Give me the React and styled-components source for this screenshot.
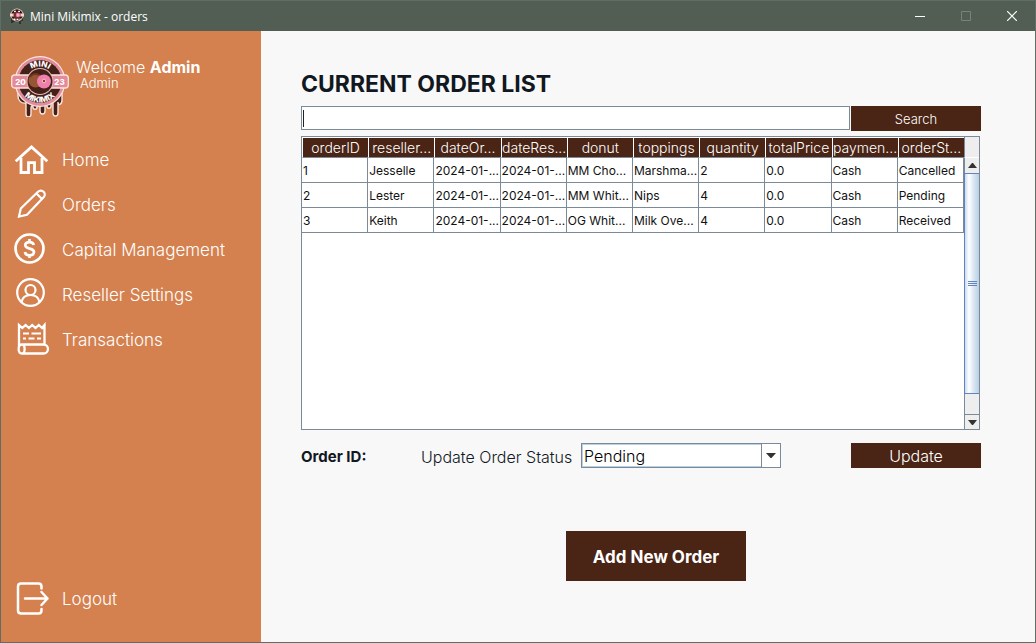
import React from "react";
import styled, { createGlobalStyle } from "styled-components";

const brown = "#4a2414";
const line = "#7a8a99";

const GlobalStyle = createGlobalStyle`
  *, *::before, *::after { box-sizing: border-box; }
  body { margin: 0; font-family: "Inter", "Liberation Sans", sans-serif; color: #12181f; }
  button, input, select { font: inherit; border-radius: 0; margin: 0; }
`;

const Window = styled.div`
  display: flex;
  flex-direction: column;
  min-height: 100vh;
  border: 1px solid #5f6e64;
  background: #f8f8f8;
`;

const TitleBar = styled.header`
  display: flex;
  align-items: center;
  height: 30px;
  padding-left: 8px;
  background: #525e54;
  color: #fff;
  font-family: "Open Sans", "Noto Sans", sans-serif;
  font-size: 12px;
`;

const WindowTitle = styled.span`
  flex: 1;
  padding-left: 5px;
`;

const WindowButton = styled.button`
  display: grid;
  place-items: center;
  width: 46px;
  height: 30px;
  padding: 0;
  border: 0;
  background: none;
  color: ${(p) => (p.disabled ? "#77827a" : "#fff")};
`;

const Body = styled.div`
  display: flex;
  flex: 1;
`;

const Sidebar = styled.aside`
  display: flex;
  flex-direction: column;
  flex: none;
  width: 260px;
  padding: 24px 0 21px 10px;
  background: #d4814f;
  color: #fff;
`;

const Profile = styled.div`
  display: flex;
  gap: 7px;
  height: 82px;
`;

const Greeting = styled.div`
  font-size: 16px;
  font-weight: 300;
  line-height: 24px;
`;

const Strong = styled.strong`
  font-weight: 700;
`;

const Role = styled.div`
  padding-left: 4px;
  font-size: 13px;
  font-weight: 300;
  line-height: 8px;
`;

const Nav = styled.nav`
  display: flex;
  flex-direction: column;
  flex: 1;
`;

const NavLink = styled.a`
  display: flex;
  align-items: center;
  gap: 10px;
  height: 45px;
  margin-top: ${(p) => (p.$last ? "auto" : "0")};
  color: #fff;
  font-size: 17px;
  font-weight: 300;
  text-decoration: none;
`;

const Main = styled.main`
  flex: 1;
  min-width: 0;
  padding: 37px 54px 40px 40px;
`;

const Heading = styled.h1`
  margin: 0 0 6px;
  font-size: 23px;
  font-weight: 700;
  line-height: 32px;
`;

const SearchRow = styled.form`
  display: flex;
  gap: 1px;
  margin-bottom: 5px;
`;

const SearchField = styled.div`
  position: relative;
  flex: 1;
  height: 24px;
`;

const SearchInput = styled.input`
  display: block;
  width: 100%;
  height: 24px;
  padding: 0 3px;
  border: 1px solid ${line};
  background: #fff;
  outline: 0;
  font-size: 13px;
`;

const Caret = styled.span`
  position: absolute;
  left: 2px;
  top: 4px;
  width: 1px;
  height: 17px;
  background: #222;
`;

const BrownButton = styled.button`
  width: ${(p) => (p.$large ? "180px" : "130px")};
  height: ${(p) => (p.$large ? "50px" : "25px")};
  padding: ${(p) => (p.$large ? "2px 0 0" : "0")};
  border: 0;
  background: ${brown};
  color: #fff;
  font-size: ${(p) => p.$size};
  font-weight: ${(p) => (p.$large ? 700 : 300)};
`;

const TablePanel = styled.div`
  display: flex;
  height: 294px;
  margin-right: 1px;
  border: 1px solid ${line};
  background: #fff;
`;

const TableArea = styled.div`
  flex: 1;
  min-width: 0;
`;

const Table = styled.table`
  width: 100%;
  table-layout: fixed;
  border-collapse: separate;
  border-spacing: 0;
`;

const HeadCell = styled.th`
  height: 21px;
  padding: 0;
  border-top: 1px solid #fff;
  border-left: 1px solid #fff;
  border-bottom: 1px solid ${line};
  background: ${brown};
  color: #fff;
  font-size: 14px;
  font-weight: 300;
  line-height: 19px;
  text-align: center;
  white-space: nowrap;
  overflow: hidden;
`;

const Cell = styled.td`
  height: 25px;
  padding: 2px 0 0 1px;
  border-right: 1px solid ${line};
  border-bottom: 1px solid ${line};
  color: #111;
  font-size: 12px;
  line-height: 22px;
  white-space: nowrap;
  overflow: hidden;
`;

const ScrollColumn = styled.div`
  display: flex;
  flex-direction: column;
  flex: none;
  width: 15px;
  background: #eee;
`;

const Corner = styled.div`
  height: 21px;
  border-left: 1px solid ${line};
  border-bottom: 1px solid #fff;
`;

const ScrollButton = styled.button`
  display: grid;
  place-items: center;
  height: 15px;
  padding: 0;
  border: 0;
  border-left: 1px solid ${line};
  border-top: ${(p) => (p.$down ? `1px solid ${line}` : "0")};
  background: #eee;
`;

const Thumb = styled.div`
  display: grid;
  place-items: center;
  height: 221px;
  border: 1px solid #6382bf;
  border-right: 0;
  background: linear-gradient(90deg, #c8dcef, #fff 28%, #dce8f4 60%, #b8cfe5);
`;

const Track = styled.div`
  flex: 1;
  border-left: 1px solid ${line};
`;

const UpdateRow = styled.form`
  display: flex;
  align-items: center;
  height: 25px;
  margin-top: 13px;
  font-size: 15px;
`;

const OrderId = styled.span`
  flex: none;
  width: 120px;
  padding-top: 2px;
  font-weight: 700;
`;

const StatusLabel = styled.label`
  flex: none;
  width: 160px;
  padding-top: 2px;
  font-size: 16px;
  font-weight: 300;
`;

const SelectBox = styled.div`
  position: relative;
  width: 200px;
  height: 25px;
  margin-right: auto;
`;

const Select = styled.select`
  display: block;
  width: 100%;
  height: 25px;
  padding: 0 22px 0 2px;
  border: 1px solid ${line};
  background: #fff;
  box-shadow: inset 0 0 0 1px #b8cfe5;
  color: #000;
  appearance: none;
  font-size: 16px;
  font-weight: 300;
  outline: 0;
`;

const SelectArrow = styled.span`
  position: absolute;
  top: 1px;
  right: 1px;
  bottom: 1px;
  display: grid;
  place-items: center;
  width: 19px;
  border-left: 1px solid ${line};
  background: #fff;
  pointer-events: none;
`;

const AddRow = styled.div`
  display: flex;
  margin-top: 63px;
  padding-left: 265px;
`;

function Donut({ size }) {
  return (
    <svg width={size} height={size * 62 / 58} viewBox="0 0 58 62" aria-hidden="true">
      <path d="M7 34h44v11c0 5-4 6-4 2v11c0 4-5 4-5 0v-9c0-3-2-3-2 0v2c0 3-4 3-4 0 0-2-2-2-2 0v5c0 4-5 4-5 0v-4c0-2-3-2-3 0 0 3-4 3-4 0 0-2-2-2-2 1v6c0 4-5 4-5 0V48c-5 1-8-3-8-7z" fill="#432018" stroke="#fbe6df" strokeWidth="1.4" />
      <circle cx="29" cy="26.500" r="25.500" fill="#fbe6df" />
      <circle cx="29" cy="26.500" r="24.300" fill="#e38a9b" />
      <circle cx="29" cy="26.500" r="21.500" fill="#432018" />
      <rect x=".7" y="20" width="56.600" height="13" rx="3" fill="#e38a9b" stroke="#fbe6df" strokeWidth="1.3" />
      <circle cx="29" cy="26.500" r="13.500" fill="#e8b9b9" />
      <circle cx="29" cy="26.500" r="12.500" fill="#432018" />
      <circle cx="24.500" cy="25.500" r="7" fill="#985533" />
      <path d="M19 22c2-3 6-4 9-2" fill="none" stroke="#6b3522" strokeWidth="2" />
      <circle cx="33" cy="26.500" r="7" fill="#ef7fac" />
      <circle cx="33" cy="26" r="1.800" fill="#8a4235" stroke="#f8bfd0" />
      <path id="badgeTop" d="M14 26.500a15 15 0 0 1 30 0" fill="none" />
      <path id="badgeBottom" d="M8 26.500a21 21 0 0 0 42 0" fill="none" />
      <g fill="#fff" fontFamily="Inter, sans-serif" fontWeight="800" textAnchor="middle">
        <text fontSize="8"><textPath href="#badgeTop" startOffset="50%">MINI</textPath></text>
        <text fontSize="8"><textPath href="#badgeBottom" startOffset="50%">MIKIMIX</textPath></text>
        <text x="9.500" y="29.500" fontSize="8">20</text>
        <text x="48.500" y="29.500" fontSize="8">23</text>
      </g>
    </svg>
  );
}

function SmallDonut() {
  return (
    <svg width="16" height="17" viewBox="0 0 16 17" aria-hidden="true">
      <path d="M3 10v5m2-4v3m3-3v3m3-4v6m2-7v4" stroke="#2b1712" strokeWidth="1.3" />
      <circle cx="8" cy="7" r="6.500" fill="#f6dcd7" />
      <circle cx="8" cy="7" r="5.800" fill="#2b1712" />
      <path d="M5 3.500h2m2 0h2M4.500 11.200h2m1 0h2m1 0h1" stroke="#fff" strokeWidth="1.5" />
      <path d="M1 5.500h14v3H1z" fill="#f6d3d3" />
      <circle cx="8" cy="7" r="3.500" fill="#752f25" />
      <circle cx="9" cy="7" r="2.200" fill="#ef7fac" />
      <circle cx="9" cy="7" r=".7" fill="#fff" />
    </svg>
  );
}

const icons = {
  home: (
    <g strokeWidth="2.800" strokeLinejoin="miter">
      <path d="M4.700 20.300 20.500 6l15.800 14.300" />
      <path d="M10 17v14.500h7.500v-9.800h6v9.800H31V17" />
    </g>
  ),
  pencil: (
    <g strokeWidth="2.200">
      <path d="m8 30.500 1.800-8L27 5.800c1.800-1.800 4.200-1.500 5.600-.1s1.700 3.800 0 5.600L16 28.800z" />
      <path d="m25.500 7.500 5.500 5.500" />
    </g>
  ),
  dollar: (
    <g strokeWidth="2.700" transform="translate(0 -1)">
      <circle cx="18.500" cy="18.500" r="14" />
      <path d="M22.800 15c-.5-2-2-2.900-4.300-2.900-2.600 0-4.200 1.300-4.200 3.200 0 4.600 8.700 2 8.700 6.700 0 2-1.700 3.300-4.500 3.300-2.500 0-4.200-1.100-4.600-3.300M18.500 9v3.200m0 13V28" />
    </g>
  ),
  user: (
    <g strokeWidth="2.200" transform="translate(0 -2)">
      <circle cx="19.500" cy="18.500" r="13.300" />
      <circle cx="19.500" cy="16" r="5" />
      <path d="M10.500 28c1-5 4.500-7 9-7s8 2 9 7" />
    </g>
  ),
  receipt: (
    <g strokeWidth="2.300" transform="translate(0 -1)">
      <path d="M8 27V5l3.300 3 3.300-3 3.300 3 3.300-3 3.300 3 3.300-3 3.300 3L33.500 5v19.500M11 24.500h21.500a4.500 4.500 0 0 1 0 9H11c-4.500 0-4.500-9 0-9zm0 0c3.500 0 3.500 9 0 9" />
      <path d="M12 13.500h6m2.500 0H30M12 18.500h3m2.500 0h6m2.500 0h4" strokeWidth="2.200" />
    </g>
  ),
  logout: (
    <g strokeWidth="2.500" strokeLinecap="round" strokeLinejoin="round">
      <path d="M30.500 8.500V6.500c0-2-1.500-3-3-3H10c-2 0-3 1-3 3v24c0 2 1 3 3 3h17.500c2 0 3-1 3-3V29" />
      <path d="M14 18.500h22.500M30.500 12l6 6.500-6 6.500" />
    </g>
  ),
};

function Icon({ name }) {
  return (
    <svg width="41" height="37" viewBox="0 0 41 37" fill="none" stroke="#fff" aria-hidden="true">
      {icons[name]}
    </svg>
  );
}

const links = [
  ["home", "Home"],
  ["pencil", "Orders"],
  ["dollar", "Capital Management"],
  ["user", "Reseller Settings"],
  ["receipt", "Transactions"],
];

const columns = ["orderID", "reseller...", "dateOr...", "dateRes...", "donut", "toppings", "quantity", "totalPrice", "paymen...", "orderSt..."];

const orders = [
  ["1", "Jesselle", "2024-01-...", "2024-01-...", "MM Cho...", "Marshma...", "2", "0.0", "Cash", "Cancelled"],
  ["2", "Lester", "2024-01-...", "2024-01-...", "MM Whit...", "Nips", "4", "0.0", "Cash", "Pending"],
  ["3", "Keith", "2024-01-...", "2024-01-...", "OG Whit...", "Milk Ove...", "4", "0.0", "Cash", "Received"],
];

export default function App() {
  const stay = (e) => e.preventDefault();
  return (
    <Window>
      <GlobalStyle />
      <TitleBar>
        <SmallDonut />
        <WindowTitle>Mini Mikimix - orders</WindowTitle>
        <WindowButton aria-label="Minimize">
          <svg width="10" height="10"><path d="M0 5.500h10" stroke="currentColor" /></svg>
        </WindowButton>
        <WindowButton aria-label="Maximize" disabled>
          <svg width="10" height="10"><path d="M.5.5h9v9h-9z" fill="none" stroke="currentColor" /></svg>
        </WindowButton>
        <WindowButton aria-label="Close">
          <svg width="10" height="10"><path d="m0 0 10 10M10 0 0 10" stroke="currentColor" strokeWidth="1.2" /></svg>
        </WindowButton>
      </TitleBar>
      <Body>
        <Sidebar>
          <Profile>
            <Donut size={58} />
            <div>
              <Greeting>Welcome <Strong>Admin</Strong></Greeting>
              <Role>Admin</Role>
            </div>
          </Profile>
          <Nav>
            {links.map(([icon, label]) => (
              <NavLink key={label} href="#"><Icon name={icon} />{label}</NavLink>
            ))}
            <NavLink href="#" $last><Icon name="logout" />Logout</NavLink>
          </Nav>
        </Sidebar>
        <Main>
          <Heading>CURRENT ORDER LIST</Heading>
          <SearchRow onSubmit={stay}>
            <SearchField>
              <SearchInput type="text" aria-label="Search orders" />
              <Caret />
            </SearchField>
            <BrownButton $size="13px">Search</BrownButton>
          </SearchRow>
          <TablePanel>
            <TableArea>
              <Table>
                <thead>
                  <tr>{columns.map((c) => <HeadCell key={c} scope="col">{c}</HeadCell>)}</tr>
                </thead>
                <tbody>
                  {orders.map((row) => (
                    <tr key={row[0]}>{row.map((v, i) => <Cell key={i}>{v}</Cell>)}</tr>
                  ))}
                </tbody>
              </Table>
            </TableArea>
            <ScrollColumn>
              <Corner />
              <ScrollButton aria-label="Scroll up">
                <svg width="9" height="5"><path d="M0 5h9L5 0H4z" fill="#333" /></svg>
              </ScrollButton>
              <Thumb>
                <svg width="9" height="6"><path d="M0 .5h9M0 2.500h9M0 4.500h9" stroke="#6382bf" /></svg>
              </Thumb>
              <Track />
              <ScrollButton aria-label="Scroll down" $down>
                <svg width="9" height="5"><path d="M0 0h9L5 5H4z" fill="#333" /></svg>
              </ScrollButton>
            </ScrollColumn>
          </TablePanel>
          <UpdateRow onSubmit={stay}>
            <OrderId>Order ID:</OrderId>
            <StatusLabel htmlFor="status">Update Order Status</StatusLabel>
            <SelectBox>
              <Select id="status" defaultValue="Pending">
                <option>Pending</option>
                <option>Received</option>
                <option>Cancelled</option>
              </Select>
              <SelectArrow>
                <svg width="10" height="5"><path d="M0 0h10L5.500 5h-1z" fill="#333" /></svg>
              </SelectArrow>
            </SelectBox>
            <BrownButton $size="16px">Update</BrownButton>
          </UpdateRow>
          <AddRow>
            <BrownButton $large $size="17px">Add New Order</BrownButton>
          </AddRow>
        </Main>
      </Body>
    </Window>
  );
}
